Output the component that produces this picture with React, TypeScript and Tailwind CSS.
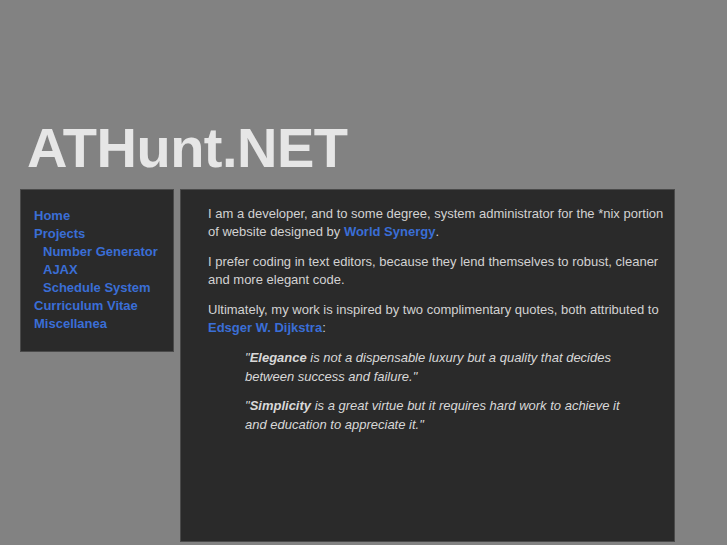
const links = [
  { label: "Home", sub: false },
  { label: "Projects", sub: false },
  { label: "Number Generator", sub: true },
  { label: "AJAX", sub: true },
  { label: "Schedule System", sub: true },
  { label: "Curriculum Vitae", sub: false },
  { label: "Miscellanea", sub: false },
];

export default function App() {
  return (
    <div className="min-h-[545px] w-[727px] overflow-hidden bg-[#828282] font-['Liberation_Sans',Arial,sans-serif]">
      <h1 className="pl-[27px] pt-[111px] text-[56px] font-bold leading-[74px] tracking-[-0.5px] text-[#e6e6e6]">
        ATHunt.NET
      </h1>

      <div className="mt-[4px] flex items-start gap-[6px] pl-[20px]">
        <nav className="w-[154px] border border-[#4a4a4a] bg-[#2a2a2a] pb-[18px] pl-[13px] pt-[17px]">
          <ul className="flex flex-col text-[13px] leading-[18px]">
            {links.map((l) => (
              <li key={l.label} className={l.sub ? "pl-[9px]" : ""}>
                <a href="#" className="font-bold text-[#3a6ed6]">
                  {l.label}
                </a>
              </li>
            ))}
          </ul>
        </nav>

        <main className="h-[353px] w-[495px] border border-[#4a4a4a] bg-[#2a2a2a] pl-[27px] pt-[15px] text-[13px] leading-[18px] text-[#d2d2d2]">
          <div className="w-[462px]">
            <p>
              I am a developer, and to some degree, system administrator for the *nix portion of website designed by{" "}
              <a href="#" className="font-bold text-[#3a6ed6]">World Synergy</a>.
            </p>
            <p className="mt-[12px]">
              I prefer coding in text editors, because they lend themselves to robust, cleaner and more elegant code.
            </p>
            <p className="mt-[12px]">
              Ultimately, my work is inspired by two complimentary quotes, both attributed to{" "}
              <a href="#" className="font-bold text-[#3a6ed6]">Edsger W. Dijkstra</a>:
            </p>
            <blockquote className="ml-[37px] mr-[50px] mt-[11px] italic leading-[19px] text-[#d8d8d8]">
              <p>
                "<b>Elegance</b> is not a dispensable luxury but a quality that decides between success and failure."
              </p>
              <p className="mt-[10px]">
                "<b>Simplicity</b> is a great virtue but it requires hard work to achieve it and education to appreciate it."
              </p>
            </blockquote>
          </div>
        </main>
      </div>
    </div>
  );
}
